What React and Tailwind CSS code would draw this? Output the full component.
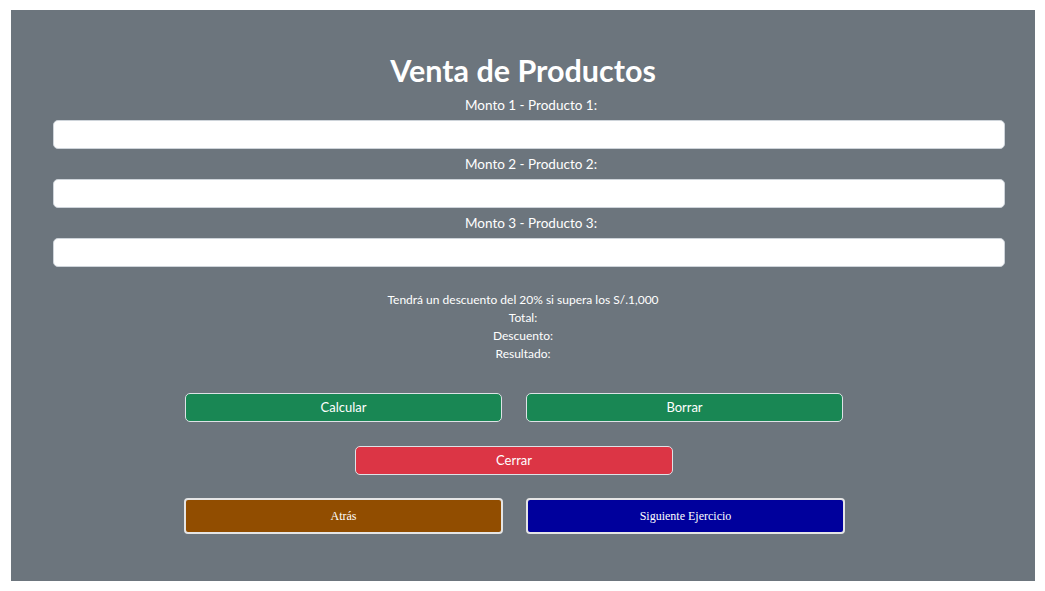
import React from "react";

function Field({ label }) {
  return (
    <div className="flex flex-col">
      <label className="mx-auto my-[5px] h-[20px] pl-[4px] text-[13.5px] leading-[20px] text-white">{label}</label>
      <input
        type="text"
        className="h-[29px] w-full rounded-[5px] border border-[#ced4da] bg-white px-3 text-[14px] outline-none"
      />
    </div>
  );
}

export default function App() {
  return (
    <div className="min-h-screen bg-white pt-[10px] font-['Lato','Noto_Sans',sans-serif]">
      <div className="mx-[11px] h-[571px] w-[1024px] bg-[#6c757d] pt-[42px]">
        <h1 className="h-[36px] text-center text-[30.5px] font-bold leading-[36px] text-white">Venta de Productos</h1>

        <div className="mt-[2px] ml-[42px] w-[952px]">
          <Field label="Monto 1 - Producto 1:" />
          <Field label="Monto 2 - Producto 2:" />
          <Field label="Monto 3 - Producto 3:" />
        </div>

        <div className="mt-[24px] flex flex-col items-center text-[12px] leading-[18px] text-white">
          <p>Tendrá un descuento del 20% si supera los S/.1,000</p>
          <p>Total:</p>
          <p>Descuento:</p>
          <p>Resultado:</p>
        </div>

        <div className="mt-[30px] ml-[174px] flex gap-[24px]">
          <button className="h-[29px] w-[317px] rounded-[5px] border border-[#dee2e6] bg-[#198754] pt-[1px] text-[13px] text-white">
            Calcular
          </button>
          <button className="h-[29px] w-[317px] rounded-[5px] border border-[#dee2e6] bg-[#198754] pt-[1px] text-[13px] text-white">
            Borrar
          </button>
        </div>

        <div className="mt-[24px] ml-[344px] flex">
          <button className="h-[29px] w-[318px] rounded-[5px] border border-[#dee2e6] bg-[#dc3545] pt-[1px] text-[13px] text-white">
            Cerrar
          </button>
        </div>

        <div className="mt-[23px] ml-[173px] flex gap-[23px]">
          <button className="h-[36px] w-[319px] rounded-[4px] border-2 border-[#e5e5e5] bg-[#914d00] font-['Liberation_Serif',serif] text-[12px] text-white">
            Atrás
          </button>
          <button className="h-[36px] w-[319px] rounded-[4px] border-2 border-[#e5e5e5] bg-[#00009c] font-['Liberation_Serif',serif] text-[12px] text-white">
            Siguiente Ejercicio
          </button>
        </div>
      </div>
    </div>
  );
}
